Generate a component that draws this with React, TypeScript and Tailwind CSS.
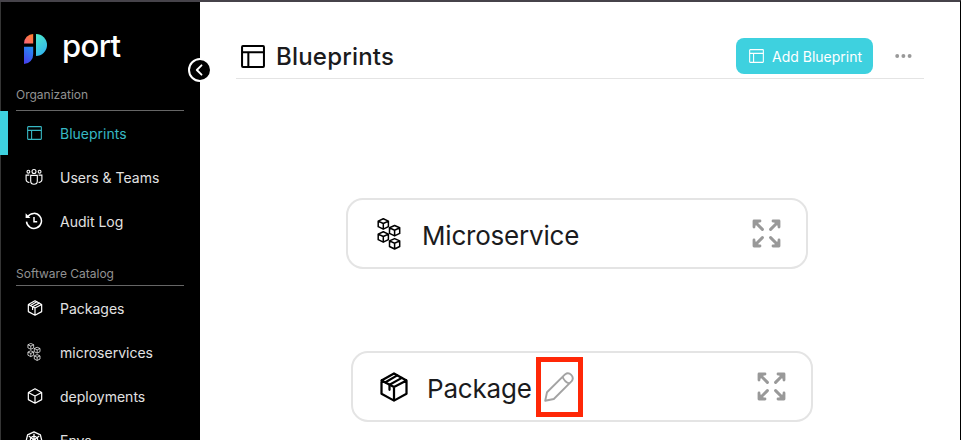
import type { ReactNode } from "react";

function LayoutIcon({ className = "", stroke = 1.15 }: { className?: string; stroke?: number }) {
  return (
    <svg className={className} viewBox="0 0 16 15" fill="none" stroke="currentColor" strokeWidth={stroke} preserveAspectRatio="none">
      <rect x="0.7" y="0.7" width="14.6" height="13.6" rx="0.6" />
      <path d="M0.7 4.7H15.3M4.9 4.7V14.3" />
    </svg>
  );
}

function BoxIcon({ className = "", tape = false, stroke = 1.8 }: { className?: string; tape?: boolean; stroke?: number }) {
  return (
    <svg className={className} viewBox="0 0 24 24" fill="none" stroke="currentColor" strokeWidth={stroke} strokeLinejoin="round" strokeLinecap="round">
      <path d="M12 1.2 22 6.8V17.4L12 22.9 2 17.4V6.8ZM2 6.8 12 12 22 6.8M12 12V22.9" />
      {tape && <path d="M14.6 2.7 5.2 8.2M18.3 4.7 8.4 10.2V14.2" />}
    </svg>
  );
}

function ClusterIcon({ className = "", stroke = 1 }: { className?: string; stroke?: number }) {
  const cube = "M0-5.2L5.1-2.9V2.7L0 5.2-5.1 2.7V-2.9ZM-5.1-2.9L0-.5 5.1-2.9M0-.5V5.2";
  return (
    <svg className={className} viewBox="0 0 24 32" fill="none" stroke="currentColor" strokeWidth={stroke} strokeLinejoin="round">
      <path transform="translate(6.3 6)" d={cube} />
      <path transform="translate(17.6 12.7)" d={cube} />
      <path transform="translate(6.3 19)" d={cube} />
      <path transform="translate(17.6 25.8)" d={cube} />
    </svg>
  );
}

function UsersIcon() {
  return (
    <svg className="size-[18px]" viewBox="0 0 18 18" fill="none" stroke="currentColor" strokeWidth="1.1">
      <circle cx="9" cy="3.5" r="2" />
      <circle cx="3.4" cy="3.7" r="1.4" />
      <circle cx="14.6" cy="3.7" r="1.4" />
      <path d="M5.7 7.4h6.6v5.6a3.3 3.3 0 0 1-6.6 0ZM4.4 7.1H1.1v4.5a3 3 0 0 0 3.3 2.8M13.6 7.1h3.3v4.5a3 3 0 0 1-3.3 2.8" />
    </svg>
  );
}

function HistoryIcon() {
  return (
    <svg className="size-[18px]" viewBox="0 0 18 18" fill="none" stroke="currentColor" strokeWidth="1.5">
      <path d="M2.8 4.6A7.5 7.5 0 1 1 1.5 9.6M9 5V9.8H12.2" />
      <path d="M.6 1.2V6H5.4Z" fill="currentColor" stroke="none" />
    </svg>
  );
}

function HelmIcon() {
  return (
    <svg className="size-[18px]" viewBox="0 0 18 18" fill="none" stroke="currentColor" strokeWidth="1.3" strokeLinejoin="round">
      <path d="M9 .8 15.4 3.8 17 10.5 12.6 16.4H5.4L1 10.5 2.6 3.8Z" />
      <circle cx="9" cy="9" r="3.7" />
      <path d="M9 2.7V9L3.8 5M9 9l5.2-4M9 9l-6.2 1.6M9 9l6.2 1.6M9 9l-2.8 5.6M9 9l2.8 5.6" />
    </svg>
  );
}

function ExpandIcon() {
  return (
    <svg className="h-[29px] w-[29px] text-[#999]" viewBox="0 0 29 29" fill="none" stroke="currentColor" strokeWidth="3" strokeLinecap="round" strokeLinejoin="round">
      <path d="M10.4 10.4 3 3M18.6 10.4 26 3M10.4 18.6 3 26M18.6 18.6 26 26" />
      <path d="M2 8V2H8M21 2H27V8M2 21V27H8M27 21V27H21" strokeWidth="2.8" />
      <path d="M2 2H8L2 8ZM27 2V8L21 2ZM2 27V21L8 27ZM27 27H21L27 21Z" fill="currentColor" stroke="none" />
    </svg>
  );
}

function NavItem({ icon, label, active = false }: { icon: ReactNode; label: string; active?: boolean }) {
  return (
    <a
      className={`flex h-11 shrink-0 items-center border-l-8 pl-4 text-sm ${
        active ? "border-[#3ed1df] text-[#37b8c4]" : "border-transparent text-[#e2e2e2]"
      }`}
    >
      <span className={`mr-4 flex w-5 justify-center ${active ? "" : "text-white"}`}>{icon}</span>
      <span className="mt-px">{label}</span>
    </a>
  );
}

function BlueprintCard({ icon, label, className, children }: { icon: ReactNode; label: string; className: string; children?: ReactNode }) {
  return (
    <article className={`flex h-[71px] w-[462px] shrink-0 items-center rounded-[17px] border-2 border-[#e4e4e4] bg-white pr-[25px] pl-[27px] ${className}`}>
      <span className="flex w-7 justify-center text-black">{icon}</span>
      <span className="mt-[5px] ml-[19px] text-[26px] leading-8 tracking-[-0.2px] text-[#1b1b1d]">{label}</span>
      {children}
      <span className="ml-auto">
        <ExpandIcon />
      </span>
    </article>
  );
}

export default function App() {
  return (
    <div className="flex h-[440px] w-[961px] overflow-hidden border-t-2 border-r border-t-[#46434a] border-r-black bg-white font-['Inter',sans-serif]">
      <aside className="relative flex w-[200px] shrink-0 flex-col bg-black shadow-[inset_1px_0_0_#353535]">
        <div className="flex h-[84px] shrink-0 items-start pt-[31px] pl-[23px]">
          <svg className="h-8 w-6" viewBox="0 0 24 32">
            <defs>
              <linearGradient id="coral" x1="1" y1="0" x2="0" y2="1">
                <stop stopColor="#ff8125" />
                <stop offset="1" stopColor="#f86280" />
              </linearGradient>
              <linearGradient id="teal" x1="0" y1="0" x2=".4" y2="1">
                <stop stopColor="#4deccb" />
                <stop offset="1" stopColor="#34b7ed" />
              </linearGradient>
              <linearGradient id="blue" x1=".7" y1="0" x2=".3" y2="1">
                <stop stopColor="#268df4" />
                <stop offset="1" stopColor="#4541ed" />
              </linearGradient>
            </defs>
            <path d="M1 10.5A9.2 9.5 0 0 1 10.2 1V10.5Z" fill="url(#coral)" />
            <path d="M13 1A11 11 0 0 1 13 23Z" fill="url(#teal)" />
            <path d="M1 13.7H10.2V21A9.5 9.5 0 0 1 1 31Z" fill="url(#blue)" />
          </svg>
          <span className="mt-[-7px] ml-[15px] text-[31px] leading-10 font-medium tracking-[-0.6px] text-white">port</span>
        </div>
        <button className="absolute top-[56px] left-[188px] flex size-6 items-center justify-center rounded-full border-2 border-white bg-black">
          <svg className="h-3.5 w-2.5" viewBox="0 0 10 14" fill="none" stroke="#fff" strokeWidth="1.9" strokeLinecap="round" strokeLinejoin="round">
            <path d="M6.5 2.3 1.8 7 6.5 11.7" />
          </svg>
        </button>

        <h2 className="mx-4 h-[25px] shrink-0 border-b border-[#666] text-xs leading-[18px] text-[#929292]">Organization</h2>
        <NavItem active label="Blueprints" icon={<LayoutIcon className="ml-px h-3.5 w-[15px]" />} />
        <NavItem label="Users & Teams" icon={<UsersIcon />} />
        <NavItem label="Audit Log" icon={<HistoryIcon />} />
        <h2 className="mx-4 mt-[22px] h-[21px] shrink-0 border-b border-[#666] text-xs leading-[18px] text-[#929292]">Software Catalog</h2>
        <NavItem label="Packages" icon={<BoxIcon tape className="ml-px size-4" />} />
        <NavItem label="microservices" icon={<ClusterIcon className="h-[18px] w-[14px]" stroke={1.3} />} />
        <NavItem label="deployments" icon={<BoxIcon className="ml-px size-4" />} />
        <NavItem label="Envs" icon={<HelmIcon />} />
      </aside>

      <main className="flex grow flex-col">
        <header className="mr-9 ml-9 flex h-[77px] shrink-0 items-center border-b border-[#e4e4e4] pt-8">
          <LayoutIcon className="ml-[5px] h-[23px] w-6 text-black" stroke={1.35} />
          <h1 className="mt-0.5 ml-[11px] text-2xl leading-8 font-medium tracking-[0.2px] text-[#1b1b1d]">Blueprints</h1>
          <button className="ml-auto flex h-9 w-[137px] items-center rounded-lg bg-[#3ed1df] pl-[13px] text-sm text-white">
            <LayoutIcon className="mr-2 h-3.5 w-[15px]" />
            <span className="mt-0.5">Add Blueprint</span>
          </button>
          <svg className="mr-3 ml-[22px] h-1 w-[17px] fill-[#999]" viewBox="0 0 17 4">
            <circle cx="2.2" cy="2" r="1.95" />
            <circle cx="8.4" cy="2" r="1.95" />
            <circle cx="14.6" cy="2" r="1.95" />
          </svg>
        </header>
        <section className="flex flex-col">
          <BlueprintCard className="mt-[119px] ml-[146px]" label="Microservice" icon={<ClusterIcon className="h-8 w-6" stroke={1.5} />} />
          <BlueprintCard className="mt-[82px] ml-[151px]" label="Package" icon={<BoxIcon tape className="size-[30px] shrink-0" stroke={1.8} />}>
            <span className="mt-px ml-1 flex h-[60px] w-[47px] items-center justify-center border-[5px] border-[#ff2807]">
              <svg className="h-[30px] w-[30px] shrink-0" viewBox="0 0 30 30" fill="none" stroke="#a3a3a3" strokeWidth="1.9" strokeLinejoin="round">
                <path d="M1.2 28.8 3 20.2 21 2.4A4.8 4.8 0 0 1 27.7 9.1L9.8 27ZM18.6 4.8Q20.3 9.8 25.3 11.5" />
              </svg>
            </span>
          </BlueprintCard>
        </section>
      </main>
    </div>
  );
}
